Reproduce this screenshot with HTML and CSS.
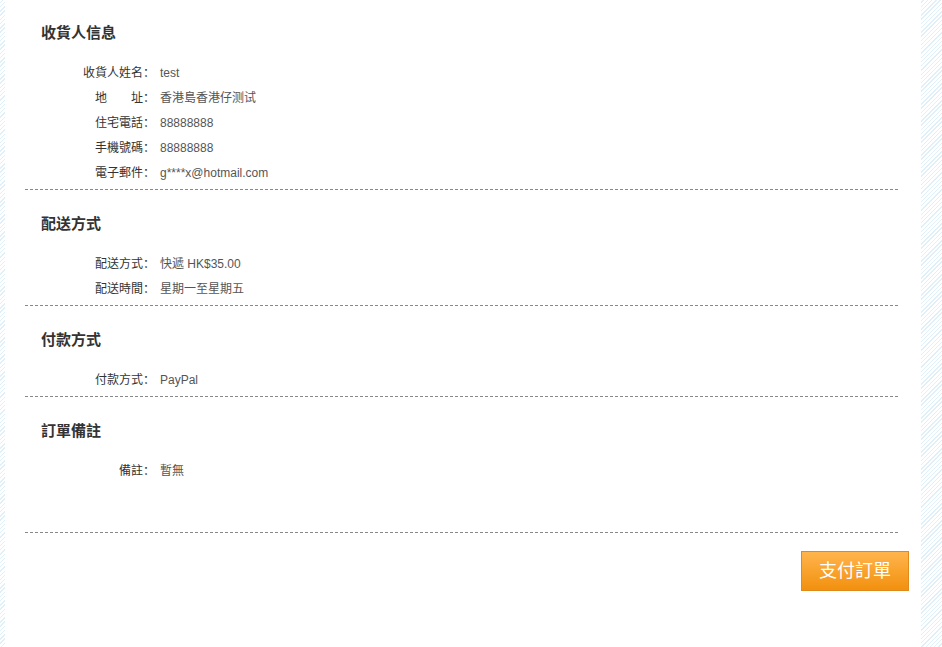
FILE: index.html
```html
<!DOCTYPE html>
<html>
<head>
<meta charset="utf-8" />
<title>確認訂單</title>
<link rel="stylesheet" href="styles.css">
</head>
<body>
<div class="page">
	<div class="order_info">
		<div class="info_box">
			<h3>收貨人信息</h3>
			<dl class="info_list">
				<dt>收貨人姓名：</dt><dd>test</dd>
				<dt>地　　址：</dt><dd>香港島香港仔测试</dd>
				<dt>住宅電話：</dt><dd>88888888</dd>
				<dt>手機號碼：</dt><dd>88888888</dd>
				<dt>電子郵件：</dt><dd>g****x@hotmail.com</dd>
			</dl>
		</div>
		<div class="info_box">
			<h3>配送方式</h3>
			<dl class="info_list">
				<dt>配送方式：</dt><dd>快遞 HK$35.00</dd>
				<dt>配送時間：</dt><dd>星期一至星期五</dd>
			</dl>
		</div>
		<div class="info_box">
			<h3>付款方式</h3>
			<dl class="info_list">
				<dt>付款方式：</dt><dd>PayPal</dd>
			</dl>
		</div>
		<div class="info_box info_remark">
			<h3>訂單備註</h3>
			<dl class="info_list">
				<dt>備註：</dt><dd>暫無</dd>
			</dl>
		</div>
	</div>
	<div class="order_btn">
		<a href="#" class="btn_pay">支付訂單</a>
	</div>
</div>
</body>
</html>
```

FILE: styles.css
```css
html,body{margin:0;padding:0;}
body{
	font:normal 12px/1.5 "Liberation Sans", Arial, "Noto Sans CJK SC", sans-serif;
	color:#333;
	background:#fff repeating-linear-gradient(-45deg,#fff 0,#fff 2px,#dff0f8 2px,#dff0f8 3px);
}
h3,dl,dt,dd{margin:0;padding:0;}
.page{margin-left:5px;width:916px;min-height:100vh;background:#fff;}
.order_info{padding:0 23px 0 20px;}
.info_box{padding:21px 0 3px;border-bottom:1px dashed #888;}
.info_box + .info_box{padding-top:22px;}
.info_box h3{padding-left:16px;height:24px;font-size:15px;line-height:24px;font-weight:bold;color:#333;}
.info_list{display:grid;grid-template-columns:130px 1fr;column-gap:5px;margin-top:16px;line-height:25px;}
.info_list dt{text-align:right;color:#333;}
.info_list dd{color:#555;}
.info_remark{padding-bottom:48px;}
.order_btn{display:flex;justify-content:flex-end;padding:18px 12px 0 0;}
.btn_pay{
	display:block;width:106px;height:38px;line-height:38px;text-align:center;
	font-size:18px;color:#fff;text-decoration:none;
	border:1px solid #e08a1c;
	background:linear-gradient(#ffb54c,#f2900f);
}
```
